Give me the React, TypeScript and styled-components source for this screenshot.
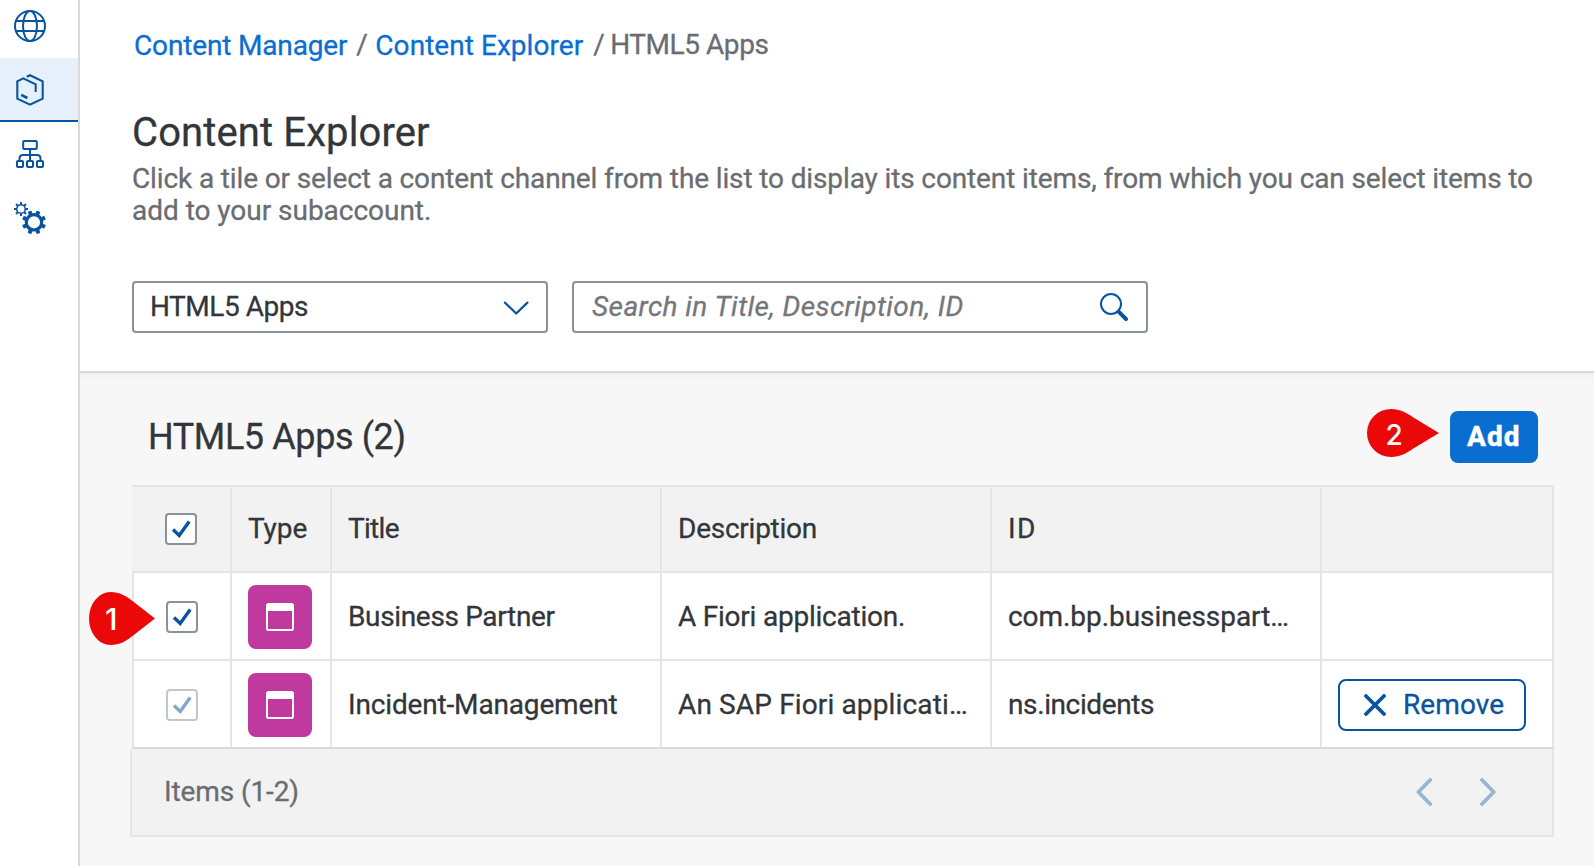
import React from "react";
import styled, { createGlobalStyle, css } from "styled-components";

const GlobalStyle = createGlobalStyle`
  *, *::before, *::after { box-sizing: border-box; }
  html, body { margin: 0; height: 100%; overflow: hidden; }
  body {
    background: #fff;
    color: #32363a;
    font-family: Roboto, "Liberation Sans", sans-serif;
    font-size: 28px;
    -webkit-text-stroke: 0.3px currentColor;
  }
  svg { display: block; flex: none; }
`;

const Page = styled.div`
  position: relative;
  display: flex;
  width: 1594px;
  height: 866px;
  overflow: hidden;
`;

const Sidebar = styled.nav`
  flex: none;
  display: flex;
  flex-direction: column;
  width: 80px;
  border-right: 2px solid #d9d9d9;
  background: #fff;
  overflow: hidden;
`;

const NavItem = styled.a<{ $active?: boolean; $first?: boolean }>`
  display: flex;
  flex: none;
  align-items: center;
  height: ${(p) => (p.$first ? 58 : 64)}px;
  padding: 0 0 ${(p) => (p.$first ? 6 : 0)}px 14px;
  color: #0854a0;
  ${(p) =>
    p.$active &&
    css`
      background: #e5f0fa;
      box-shadow: inset 0 -2px 0 #0854a0;
    `}
`;

const Main = styled.main`
  flex: 1;
  min-width: 0;
  display: flex;
  flex-direction: column;
`;

const Header = styled.header`
  flex: none;
  height: 373px;
  padding: 30px 40px 0 52px;
  border-bottom: 2px solid #d9d9d9;
  background: #fff;
`;

const Text = styled.span<{ $ls?: number; $raised?: boolean }>`
  letter-spacing: ${(p) => p.$ls ?? 0}px;
  white-space: nowrap;
  ${(p) => p.$raised && "margin-top: -2px;"}
`;

const Breadcrumb = styled.div`
  display: flex;
  align-items: flex-start;
  height: 79px;
  padding-left: 2px;
  line-height: 30px;
  color: #6a6d70;
`;

const Crumb = styled(Text)`
  color: #0a6ed1;
  line-height: 32px;
`;

const Slash = styled.span<{ $l: number; $r: number }>`
  width: 10px;
  margin: 0 ${(p) => p.$r}px 0 ${(p) => p.$l}px;
`;

const Title = styled.h1`
  margin: 0;
  font-size: 40px;
  line-height: 48px;
  font-weight: 400;
  letter-spacing: 0.12px;
`;

const Lead = styled.p`
  display: flex;
  flex-direction: column;
  margin: 6px 0 54px;
  line-height: 32px;
  color: #6a6d70;
`;

const Filters = styled.div`
  display: flex;
  gap: 24px;
`;

const Field = styled.div<{ $w: number; $pad: string }>`
  display: flex;
  align-items: center;
  justify-content: space-between;
  width: ${(p) => p.$w}px;
  height: 52px;
  padding: ${(p) => p.$pad};
  border: 2px solid #89919a;
  border-radius: 4px;
  background: #fff;
  color: #32363a;
`;

const Placeholder = styled(Text)`
  font-style: italic;
  color: #74777a;
`;

const Content = styled.section`
  flex: 1;
  padding: 0 40px 0 50px;
  background: linear-gradient(#efefef, #f7f7f7 8px);
`;

const PanelHead = styled.div`
  display: flex;
  align-items: center;
  justify-content: space-between;
  height: 112px;
  padding: 38px 16px 22px 18px;
`;

const PanelTitle = styled.h2`
  margin: 0;
  font-size: 36px;
  font-weight: 400;
  line-height: 44px;
  letter-spacing: -0.4px;
`;

const AddButton = styled.button`
  width: 88px;
  height: 52px;
  padding: 0 0 2px 17px;
  border: 0;
  border-radius: 8px;
  background: #0a6ed1;
  color: #fff;
  font: 800 28px Roboto, sans-serif;
  letter-spacing: 1px;
  text-align: left;
`;

const Table = styled.div`
  margin-left: 2px;
  border-top: 2px solid #e5e5e5;
`;

const Row = styled.div<{ $head?: boolean; $last?: boolean }>`
  display: grid;
  grid-template-columns: 100px 100px 330px 330px 330px 232px;
  height: ${(p) => (p.$head ? 86 : 88)}px;
  border-bottom: 2px solid ${(p) => (p.$last ? "#d9d9d9" : "#e5e5e5")};
  background: ${(p) => (p.$head ? "#f2f2f2" : "#fff")};
`;

const Cell = styled.div<{ $check?: "head" | "row"; $control?: boolean }>`
  display: flex;
  align-items: center;
  min-width: 0;
  padding: ${(p) => (p.$control ? 2 : 0)}px 0 0 16px;
  border-right: 2px solid #e5e5e5;
  ${(p) => p.$check === "head" && "padding-left: 33px;"}
  ${(p) => p.$check === "row" && "padding-left: 32px; border-left: 2px solid #e5e5e5;"}
`;

const Box = styled.span<{ $disabled?: boolean }>`
  width: 32px;
  height: 32px;
  border: 2px solid #89919a;
  border-radius: 4px;
  background: #fff;
  color: #0854a0;
  opacity: ${(p) => (p.$disabled ? 0.5 : 1)};
`;

const Tile = styled.span`
  display: flex;
  align-items: center;
  justify-content: center;
  width: 64px;
  height: 64px;
  border-radius: 8px;
  background: #c0399f;
`;

const RemoveButton = styled.button`
  display: flex;
  align-items: center;
  gap: 17px;
  width: 188px;
  height: 52px;
  padding: 0 0 0 24px;
  border: 2px solid #0854a0;
  border-radius: 8px;
  background: #fff;
  color: #0854a0;
  font: 400 28px Roboto, sans-serif;
`;

const Footer = styled.footer`
  display: flex;
  align-items: center;
  justify-content: space-between;
  height: 88px;
  padding: 0 52px 0 32px;
  border: 2px solid #e5e5e5;
  border-top: 0;
  background: #f2f2f2;
  color: #6a6d70;
`;

const Pager = styled.div`
  display: flex;
  gap: 44px;
  color: #9ab4d4;
`;

const Pin = styled.div<{ $x: number; $y: number }>`
  position: absolute;
  left: ${(p) => p.$x}px;
  top: ${(p) => p.$y}px;
  -webkit-text-stroke: 0;
`;

const GlobeIcon = () => (
  <svg width="32" height="32" viewBox="0 0 32 32" fill="none" stroke="currentColor" strokeWidth="2">
    <circle cx="16" cy="16" r="15" />
    <ellipse cx="16" cy="16" rx="7" ry="15" />
    <path d="M2 11H30M2 21H30" />
  </svg>
);

const CubeIcon = () => (
  <svg width="32" height="32" viewBox="0 0 32 32" fill="none" stroke="currentColor" strokeWidth="2.1">
    <path d="M12.8 2.8L16 1.2L28.7 7.3V24.6L16 30.7L3.3 24.6V7.3L9.3 4.4L21.7 10.3V18" />
    <path d="M7.2 20.8L13.4 24" strokeWidth="2.6" />
  </svg>
);

const TreeIcon = () => (
  <svg width="32" height="32" viewBox="0 0 32 32" fill="none" stroke="currentColor" strokeWidth="2">
    <rect x="9.2" y="3" width="13.6" height="8" rx="1" />
    <path d="M16 11V23M5.5 23V20.5Q5.5 17 9 17H23Q26.5 17 26.5 20.5V23" />
    <rect x="3" y="23" width="6" height="6" rx="1" />
    <rect x="13" y="23" width="6" height="6" rx="1" />
    <rect x="23" y="23" width="6" height="6" rx="1" />
  </svg>
);

type GearProps = { x: number; y: number; r: number; w: number; tip: number; tooth: number; turn: number };
const Gear = ({ x, y, r, w, tip, tooth, turn }: GearProps) => (
  <g transform={`translate(${x} ${y})`}>
    <circle r={r} fill="none" stroke="currentColor" strokeWidth={w} />
    {Array.from({ length: 8 }, (_, i) => (
      <rect key={i} x={-tooth / 2} y={-tip} width={tooth} height={tip - r} rx={tooth / 6}
        fill="currentColor" transform={`rotate(${turn + i * 45})`} />
    ))}
  </g>
);

const GearsIcon = () => (
  <svg width="32" height="32" viewBox="0 0 32 32">
    <Gear x={7} y={7} r={4.3} w={1.6} tip={7} tooth={2} turn={0} />
    <Gear x={20} y={20.3} r={7.7} w={3.2} tip={12} tooth={4} turn={22.5} />
  </svg>
);

const CheckIcon = () => (
  <svg width="28" height="28" viewBox="0 0 28 28" fill="none" stroke="currentColor" strokeWidth="3.4">
    <path d="M6 14.5L12.2 20.4L22.2 6.4" />
  </svg>
);

const WindowIcon = () => (
  <svg width="28" height="28" viewBox="0 0 28 28">
    <rect x="1" y="1" width="26" height="26" rx="1.5" fill="none" stroke="#fff" strokeWidth="2" />
    <rect x="1" y="1" width="26" height="7" fill="#fff" />
  </svg>
);

const ChevronDown = () => (
  <svg width="26" height="16" viewBox="0 0 26 16" fill="none" stroke="#0854a0" strokeWidth="2.2" strokeLinecap="round" strokeLinejoin="round">
    <path d="M1.9 3.6L13.2 14.5L24.4 3.6" />
  </svg>
);

const SearchIcon = () => (
  <svg width="28" height="28" viewBox="0 0 28 28" fill="none" stroke="#0854a0">
    <circle cx="11" cy="11" r="10" strokeWidth="2" />
    <path d="M18.6 18.6L26 26" strokeWidth="4" strokeLinecap="round" />
  </svg>
);

const Pointer = ({ w, h, rx, n, size, tx, ty }: { w: number; h: number; rx: number; n: string; size: number; tx: number; ty: number }) => (
  <svg width={w} height={h} viewBox={`0 0 ${w} ${h}`}>
    <path
      d={`M${rx} 0C${rx + 9} 0 ${rx + 16} 4 ${rx + 22} ${h * 0.17}L${w} ${h / 2}L${rx + 22} ${h * 0.83}C${rx + 16} ${h - 4} ${rx + 9} ${h} ${rx} ${h}A${rx} ${h / 2} 0 0 1 ${rx} 0Z`}
      fill="#ea0808"
    />
    <text x={tx} y={ty} fill="#fff" fontSize={size} fontWeight="500" fontFamily="Inter, sans-serif">
      {n}
    </text>
  </svg>
);

export default function App() {
  return (
    <Page>
      <GlobalStyle />
      <Sidebar>
        <NavItem $first><GlobeIcon /></NavItem>
        <NavItem $active><CubeIcon /></NavItem>
        <NavItem><TreeIcon /></NavItem>
        <NavItem><GearsIcon /></NavItem>
      </Sidebar>
      <Main>
        <Header>
          <Breadcrumb>
            <Crumb $ls={-0.155}>Content Manager</Crumb>
            <Slash $l={9} $r={9}>/</Slash>
            <Crumb $ls={0.046}>Content Explorer</Crumb>
            <Slash $l={10} $r={7}>/</Slash>
            <Text $ls={-0.44}>HTML5 Apps</Text>
          </Breadcrumb>
          <Title>Content Explorer</Title>
          <Lead>
            <Text $ls={-0.125}>
              Click a tile or select a content channel from the list to display its content items, from which you can select items to
            </Text>
            <Text $ls={-0.03}>add to your subaccount.</Text>
          </Lead>
          <Filters>
            <Field $w={416} $pad="0 17px 0 16px">
              <Text $ls={-0.467} $raised>HTML5 Apps</Text>
              <ChevronDown />
            </Field>
            <Field $w={576} $pad="0 18px 0 18px">
              <Placeholder $ls={0.426} $raised>Search in Title, Description, ID</Placeholder>
              <SearchIcon />
            </Field>
          </Filters>
        </Header>
        <Content>
          <PanelHead>
            <PanelTitle>HTML5 Apps (2)</PanelTitle>
            <AddButton>Add</AddButton>
          </PanelHead>
          <Table>
            <Row $head>
              <Cell $check="head"><Box><CheckIcon /></Box></Cell>
              <Cell><Text $raised $ls={-0.1}>Type</Text></Cell>
              <Cell><Text $raised $ls={-0.7}>Title</Text></Cell>
              <Cell><Text $raised $ls={-0.25}>Description</Text></Cell>
              <Cell><Text $raised $ls={1.5}>ID</Text></Cell>
              <Cell />
            </Row>
            <Row>
              <Cell $check="row" $control><Box><CheckIcon /></Box></Cell>
              <Cell $control><Tile><WindowIcon /></Tile></Cell>
              <Cell><Text $ls={-0.346}>Business Partner</Text></Cell>
              <Cell><Text $ls={-0.226}>A Fiori application.</Text></Cell>
              <Cell><Text $ls={-0.05}>com.bp.businesspart…</Text></Cell>
              <Cell />
            </Row>
            <Row $last>
              <Cell $check="row" $control><Box $disabled><CheckIcon /></Box></Cell>
              <Cell $control><Tile><WindowIcon /></Tile></Cell>
              <Cell><Text $ls={-0.158}>Incident-Management</Text></Cell>
              <Cell><Text $ls={0.14}>An SAP Fiori applicati…</Text></Cell>
              <Cell><Text $ls={-0.39}>ns.incidents</Text></Cell>
              <Cell $control>
                <RemoveButton>
                  <svg width="22" height="22" viewBox="0 0 22 22" stroke="currentColor" strokeWidth="3.8" strokeLinecap="round">
                    <path d="M2 2L20 20M20 2L2 20" />
                  </svg>
                  <Text $ls={0.1} $raised>Remove</Text>
                </RemoveButton>
              </Cell>
            </Row>
          </Table>
          <Footer>
            <Text $raised $ls={-0.1}>Items (1-2)</Text>
            <Pager>
              <svg width="20" height="28" viewBox="0 0 20 28" fill="none" stroke="currentColor" strokeWidth="3.8" strokeLinecap="round" strokeLinejoin="round">
                <path d="M14.2 2L2.4 14L14.2 26" />
              </svg>
              <svg width="20" height="28" viewBox="0 0 20 28" fill="none" stroke="currentColor" strokeWidth="3.8" strokeLinecap="round" strokeLinejoin="round">
                <path d="M2 2L13.8 14L2 26" />
              </svg>
            </Pager>
          </Footer>
        </Content>
      </Main>
      <Pin $x={1367} $y={409}>
        <Pointer w={72} h={48} rx={24} n="2" size={28} tx={18.4} ty={36} />
      </Pin>
      <Pin $x={89} $y={592}>
        <Pointer w={66} h={53} rx={21.5} n="1" size={30} tx={16} ty={38} />
      </Pin>
    </Page>
  );
}
